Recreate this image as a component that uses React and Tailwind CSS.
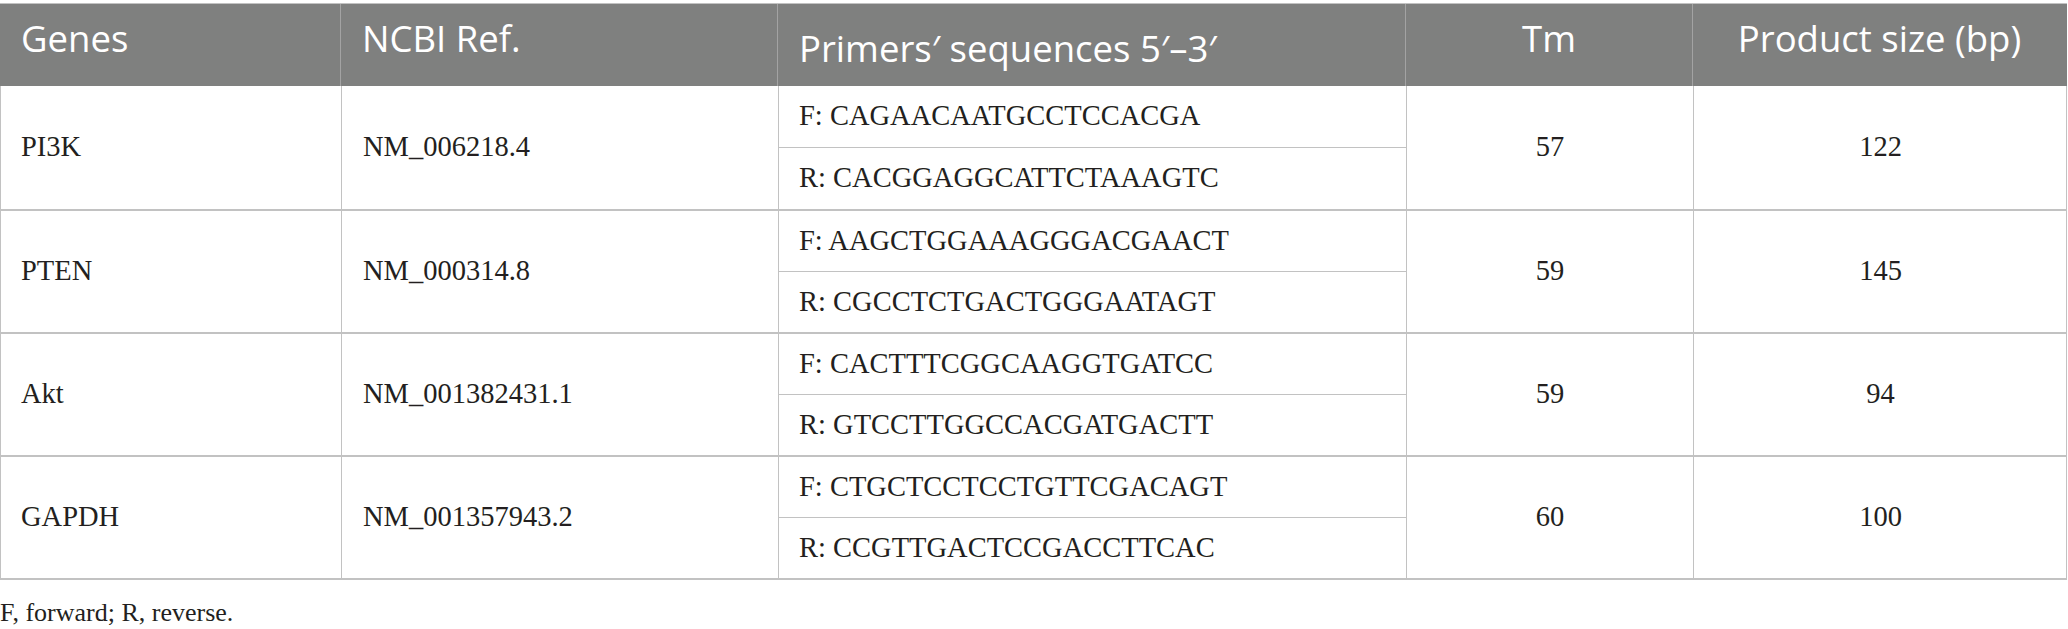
const rows = [
  { gene: "PI3K", ref: "NM_006218.4", f: "F: CAGAACAATGCCTCCACGA", r: "R: CACGGAGGCATTCTAAAGTC", tm: "57", size: "122" },
  { gene: "PTEN", ref: "NM_000314.8", f: "F: AAGCTGGAAAGGGACGAACT", r: "R: CGCCTCTGACTGGGAATAGT", tm: "59", size: "145" },
  { gene: "Akt", ref: "NM_001382431.1", f: "F: CACTTTCGGCAAGGTGATCC", r: "R: GTCCTTGGCCACGATGACTT", tm: "59", size: "94" },
  { gene: "GAPDH", ref: "NM_001357943.2", f: "F: CTGCTCCTCCTGTTCGACAGT", r: "R: CCGTTGACTCCGACCTTCAC", tm: "60", size: "100" },
];

const cols = "grid grid-cols-[341px_437px_628px_287px_373px]";

export default function App() {
  return (
    <div className="w-[2068px] min-h-[629px] bg-white pt-[3px]">
      <div className="w-[2067px] border-t border-[#c2c2c2]">
        {/* header */}
        <div className={`${cols} h-[82px] bg-[#7f807f] text-white text-[36.5px] font-['Open_Sans',sans-serif]`}>
          <div className="pl-[21px] pt-[7px] border-r border-[#a3a3a3]">Genes</div>
          <div className="pl-[21px] pt-[7px] border-r border-[#a3a3a3]">NCBI Ref.</div>
          <div className="pl-[21px] pt-[17px] border-r border-[#a3a3a3]">Primers′ sequences 5′–3′</div>
          <div className="text-center pt-[7px] border-r border-[#a3a3a3]">Tm</div>
          <div className="text-center pt-[7px]">Product size (bp)</div>
        </div>

        {/* body */}
        <div className="border-l border-r border-b-2 border-[#c2c2c2] text-[28.5px] text-[#231f20] font-['Liberation_Serif',serif]">
          {rows.map((row, i) => (
            <div key={row.gene} className={`${cols} h-[123px] ${i > 0 ? "border-t-2 border-[#c2c2c2]" : ""}`}>
              <div className="flex items-center pl-[20px] border-r border-[#c2c2c2]">{row.gene}</div>
              <div className="flex items-center pl-[21px] border-r border-[#c2c2c2]">{row.ref}</div>
              <div className="flex flex-col border-r border-[#c2c2c2]">
                <div className="flex-1 flex items-center pl-[20px] border-b border-[#c2c2c2]">{row.f}</div>
                <div className="flex-1 flex items-center pl-[20px]">{row.r}</div>
              </div>
              <div className="flex items-center justify-center border-r border-[#c2c2c2]">{row.tm}</div>
              <div className="flex items-center justify-center">{row.size}</div>
            </div>
          ))}
        </div>
      </div>

      <p className="mt-[13px] text-[26px] text-[#231f20] font-['Liberation_Serif',serif]">
        F, forward; R, reverse.
      </p>
    </div>
  );
}
